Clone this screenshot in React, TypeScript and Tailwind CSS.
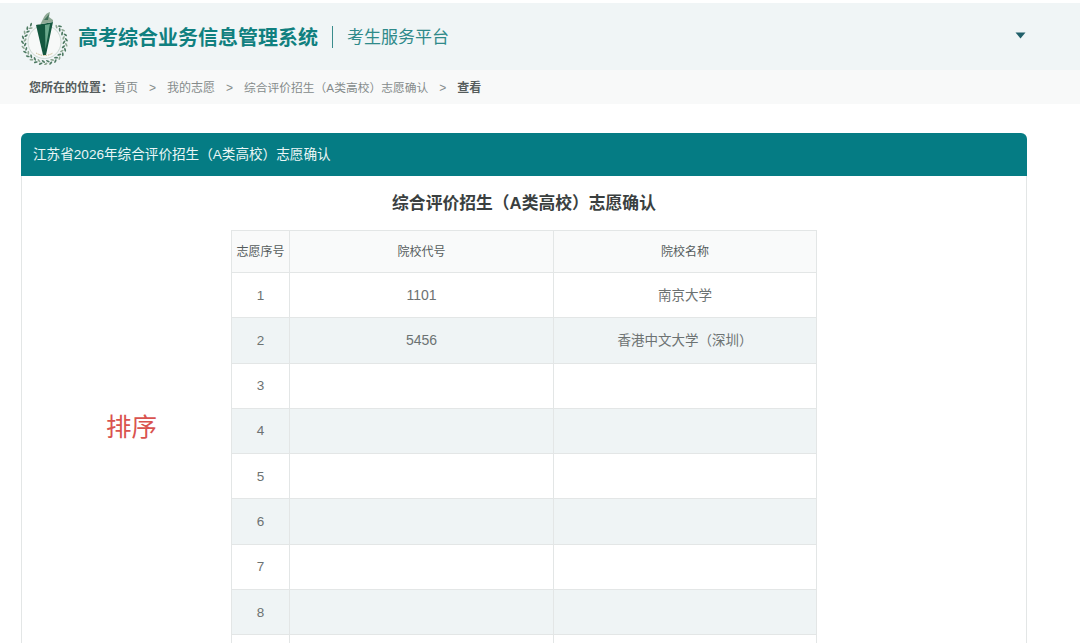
const font = { fontFamily: '"Liberation Sans", "Noto Sans CJK SC", sans-serif' }

const rows = [
    { no: 1, code: '1101', name: '南京大学' },
    { no: 2, code: '5456', name: '香港中文大学（深圳）' },
    { no: 3 },
    { no: 4 },
    { no: 5 },
    { no: 6 },
    { no: 7 },
    { no: 8 },
    {},
]

function Logo() {
    // wreath: two rows of small leaves running from the upper sides round the bottom
    const leaves = Array.from({ length: 44 })
    return (
        <svg width="48" height="54" viewBox="0 0 48 54" className="mt-[2px] shrink-0">
            {leaves.map((_, i) => {
                const deg = 38 + (i * 284) / 43
                const a = (deg * Math.PI) / 180
                const r = i % 2 === 0 ? 19.5 : 22
                const x = 23.5 + Math.sin(a) * r
                const y = 31 - Math.cos(a) * r
                return (
                    <ellipse
                        key={i}
                        cx={x}
                        cy={y}
                        rx="2"
                        ry="0.9"
                        fill={i % 3 === 0 ? '#8da892' : '#4d7a62'}
                        transform={`rotate(${deg + (i % 2 === 0 ? 35 : -35)} ${x} ${y})`}
                    />
                )
            })}
            <circle cx="23.5" cy="31" r="16.5" fill="#f7f9f8" stroke="#a9bdb0" strokeWidth="0.5" />
            <path d="M15 14 L32 11 L25 44 L22 44 Z" fill="#14573f" />
            <path d="M24 14 L29 13 L24.5 38 Z" fill="#6aa88c" />
            <path d="M19 14 L23 6 Q25 2 29 1 L28 6 L32 9 L32 11 L15 14 Z" fill="#8fa995" />
            <path d="M23 9 Q26 6 28 3 L27 9 Z" fill="#3f7059" />
            <path d="M15 42 Q23.5 47 32 42" fill="none" stroke="#c9b98a" strokeWidth="1" strokeDasharray="1.5 1" />
        </svg>
    )
}

function Crumb({ children }: { children: React.ReactNode }) {
    return <span className="text-[#858b8b]">{children}</span>
}

function Sep() {
    return <span className="mx-[11px] text-[#858b8b]">&gt;</span>
}

export default function App() {
    return (
        <div className="h-[643px] w-[1080px] overflow-hidden bg-white pt-[3px]" style={font}>
            {/* Header */}
            <header className="flex h-[67px] items-center bg-[#f0f5f6] pl-[21px] pr-[54px]">
                <Logo />
                <h1 className="ml-[9px] mt-[3px] text-[20px] font-bold text-[#10807f]">高考综合业务信息管理系统</h1>
                <div className="mx-[14px] mt-[1px] h-[22px] w-px bg-[#3a8c8c]" />
                <span className="mt-[3px] text-[17px] text-[#2f8a8a]">考生服务平台</span>
                <svg width="11" height="7" viewBox="0 0 11 7" className="-mt-[2px] ml-auto">
                    <path d="M0.5 0.5 H10.5 L5.5 6.5 Z" fill="#21606a" />
                </svg>
            </header>

            {/* Breadcrumb */}
            <nav className="flex h-[34px] items-center bg-[#f8f9f9] pl-[29px] pt-[1px] text-[12px]">
                <span className="-mr-[2px] w-[87px] font-bold text-[#555c5c]">您所在的位置：</span>
                <Crumb>首页</Crumb>
                <Sep />
                <Crumb>我的志愿</Crumb>
                <Sep />
                <span className="text-[11.75px] text-[#858b8b]">综合评价招生（A类高校）志愿确认</span>
                <Sep />
                <span className="font-bold text-[#555c5c]">查看</span>
            </nav>

            {/* Card */}
            <section className="relative ml-[21px] mt-[29px] w-[1006px] overflow-hidden rounded-t-[6px]">
                <div className="flex h-[43px] items-center bg-[#057c84] pl-[12px] pt-[2px] text-[13.6px] text-[#eaf6f6]">
                    江苏省2026年综合评价招生（A类高校）志愿确认
                </div>
                <div className="h-[480px] border-x border-[#e3e6e6] bg-white pt-[17px]">
                    <h2 className="text-center text-[16.8px] font-bold leading-[22px] text-[#3a3f3f]">
                        综合评价招生（A类高校）志愿确认
                    </h2>
                    <table className="ml-[209px] mt-[15px] w-[585px] table-fixed border-collapse text-center text-[13.5px] text-[#6c7272]">
                        <colgroup>
                            <col className="w-[58px]" />
                            <col className="w-[264px]" />
                            <col className="w-[263px]" />
                        </colgroup>
                        <thead>
                            <tr className="h-[42px] bg-[#f9fafa] text-[12px] text-[#555c5c]">
                                <th className="border border-[#e3e6e6] pt-[1px] font-normal">志愿序号</th>
                                <th className="border border-[#e3e6e6] pt-[1px] font-normal">院校代号</th>
                                <th className="border border-[#e3e6e6] pt-[1px] font-normal">院校名称</th>
                            </tr>
                        </thead>
                        <tbody>
                            {rows.map((r, i) => (
                                <tr key={i} className={`h-[45.3px] ${i % 2 === 1 ? 'bg-[#eff4f5]' : 'bg-white'}`}>
                                    <td className="border border-[#e3e6e6] pt-[1px]">{r.no}</td>
                                    <td className="border border-[#e3e6e6] pt-[1px] text-[14px]">{r.code}</td>
                                    <td className="border border-[#e3e6e6] pt-[1px]">{r.name}</td>
                                </tr>
                            ))}
                        </tbody>
                    </table>
                </div>
                {/* annotation over the page */}
                <span className="absolute left-[85px] top-[278px] text-[25.5px] leading-[32px] text-[#d9534f]">排序</span>
            </section>
        </div>
    )
}
